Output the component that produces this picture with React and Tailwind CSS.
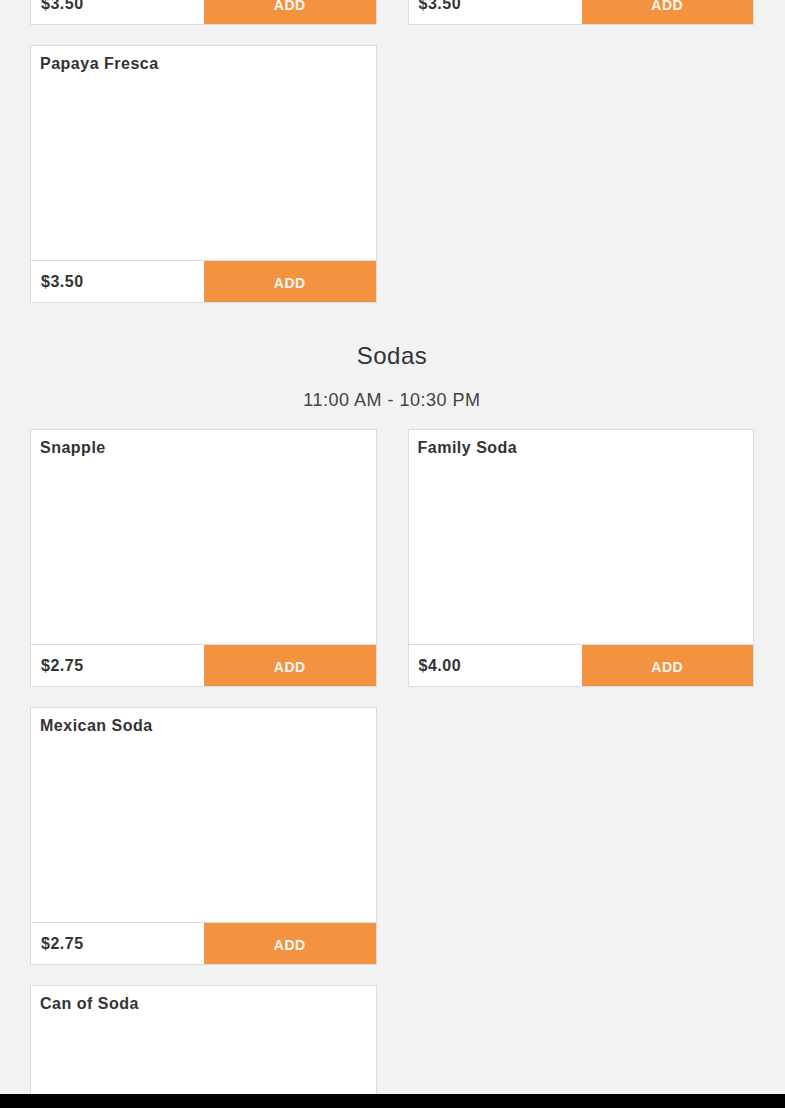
import React from 'react'

const SECTIONS = [
  {
    id: 'aguas',
    rows: [
      [
        { name: 'Horchata', price: '$3.50' },
        { name: 'Jamaica', price: '$3.50' },
      ],
      [{ name: 'Papaya Fresca', price: '$3.50' }],
    ],
  },
  {
    id: 'sodas',
    title: 'Sodas',
    hours: '11:00 AM - 10:30 PM',
    rows: [
      [
        { name: 'Snapple', price: '$2.75' },
        { name: 'Family Soda', price: '$4.00' },
      ],
      [{ name: 'Mexican Soda', price: '$2.75' }],
      [{ name: 'Can of Soda', price: '$1.50' }],
    ],
  },
]

function ItemCard({ item }) {
  return (
    <div className="flex flex-col border border-[#dcdcdc] bg-white">
      <div className="h-[214px] px-[9px] pt-[6px]">
        <h3 className="text-[16px] font-bold leading-6 tracking-[0.5px] text-[#333]">
          {item.name}
        </h3>
      </div>
      <div className="grid h-[42px] grid-cols-[173px_1fr] border-t border-[#dcdcdc]">
        <div className="flex items-center pl-[10px] text-[16px] font-bold tracking-[0.5px] text-[#333]">
          {item.price}
        </div>
        <button className="flex items-center justify-center bg-[#f3923f] pt-[3px] text-[14px] font-bold uppercase tracking-[0.5px] text-[#fdf6ee]">
          Add
        </button>
      </div>
    </div>
  )
}

export default function App() {
  return (
    <div
      className="flex min-h-screen flex-col bg-[#f2f2f2] pb-10"
      style={{ fontFamily: '"Liberation Sans", Arial, sans-serif' }}
    >
      <div className="-mt-[233px] px-[30px] pr-[31px]">
        {SECTIONS.map((section) => (
          <section key={section.id}>
            {section.title && (
              <div className="pt-[38px] pb-[15px] text-center text-[#333]">
                <h2 className="text-[24px] leading-[29px] tracking-[0.5px]">{section.title}</h2>
                <p className="mt-[17px] text-[18px] leading-[27px] tracking-[0.5px] text-[#444]">
                  {section.hours}
                </p>
              </div>
            )}
            <div className="flex flex-col gap-[20px]">
              {section.rows.map((row, i) => (
                <div key={i} className="grid grid-cols-2 gap-x-[31px]">
                  {row.map((item) => (
                    <ItemCard key={item.name} item={item} />
                  ))}
                </div>
              ))}
            </div>
          </section>
        ))}
      </div>
      <div className="fixed inset-x-0 bottom-0 h-[14px] bg-black" />
    </div>
  )
}
